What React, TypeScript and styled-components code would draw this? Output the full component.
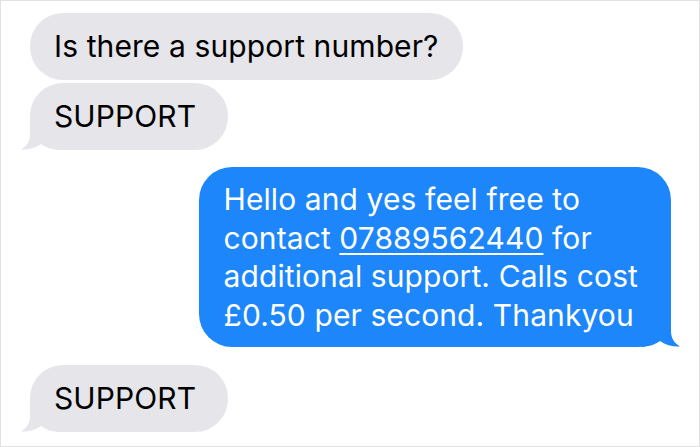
import styled, { createGlobalStyle } from "styled-components"

const GlobalStyle = createGlobalStyle`
    html, body {
        margin: 0;
        padding: 0;
        background: #ffffff;
    }
`

const Colors = {
    Gray: "#e5e5ea",
    Blue: "#1c86fa",
    Frame: "#e2e2e2",
}

type Side = "left" | "right"

function Tail({ side, color }: { side: Side; color: string }) {
    return (
        <TailSvg $side={side} width="40" height="36" viewBox="0 0 40 36">
            <path
                d="M10 0 L10 20 C10 27 7 32 1 35.5 C8 36 15 34 21 30 C26 33.5 31 35.5 40 36 L40 0 Z"
                fill={color}
            />
        </TailSvg>
    )
}

function Bubble({
    side,
    tail,
    children,
}: {
    side: Side
    tail?: boolean
    children: React.ReactNode
}) {
    return (
        <BubbleBox $side={side}>
            {tail && (
                <Tail
                    side={side}
                    color={side === "left" ? Colors.Gray : Colors.Blue}
                />
            )}
            <BubbleText>{children}</BubbleText>
        </BubbleBox>
    )
}

function App() {
    return (
        <>
            <GlobalStyle />
            <Frame>
                <Group>
                    <Bubble side="left">Is there a support number?</Bubble>
                    <Bubble side="left" tail>
                        SUPPORT
                    </Bubble>
                </Group>

                <Group $space={17}>
                    <Bubble side="right" tail>
                        Hello and yes feel free to
                        <br />
                        contact <PhoneLink>07889562440</PhoneLink> for
                        <br />
                        additional support. Calls cost
                        <br />
                        £0.50 per second. Thankyou
                    </Bubble>
                </Group>

                <Group $space={18}>
                    <Bubble side="left" tail>
                        SUPPORT
                    </Bubble>
                </Group>
            </Frame>
        </>
    )
}

export default App

const Frame = styled.div`
    width: 700px;
    height: 447px;
    box-sizing: border-box;
    border: 1px solid ${Colors.Frame};
    padding: 12px 28px 0 29px;
    display: flex;
    flex-direction: column;
    font-family: Inter, "Liberation Sans", sans-serif;
    overflow: hidden;
`

const Group = styled.div<{ $space?: number }>`
    display: flex;
    flex-direction: column;
    gap: 3px;
    margin-top: ${(p) => p.$space ?? 0}px;
`

const BubbleBox = styled.div<{ $side: Side }>`
    position: relative;
    align-self: ${(p) => (p.$side === "left" ? "flex-start" : "flex-end")};
    min-width: ${(p) => (p.$side === "left" ? "150px" : "0")};
    background: ${(p) => (p.$side === "left" ? Colors.Gray : Colors.Blue)};
    color: ${(p) => (p.$side === "left" ? "#000000" : "#ffffff")};
    border-radius: 33px;
    padding: ${(p) => (p.$side === "left" ? "14.25px 24px" : "13px 33px 13px 25px")};
`

const BubbleText = styled.div`
    position: relative;
    font-size: 30px;
    letter-spacing: 0.1px;
    line-height: 38.5px;
    white-space: nowrap;
`

const TailSvg = styled.svg<{ $side: Side }>`
    position: absolute;
    bottom: 0;
    ${(p) =>
        p.$side === "left"
            ? "left: -10px;"
            : "right: -10px; transform: scaleX(-1);"}
`

const PhoneLink = styled.span`
    text-decoration: underline;
    text-decoration-thickness: 1.5px;
    text-underline-offset: 4px;
`
